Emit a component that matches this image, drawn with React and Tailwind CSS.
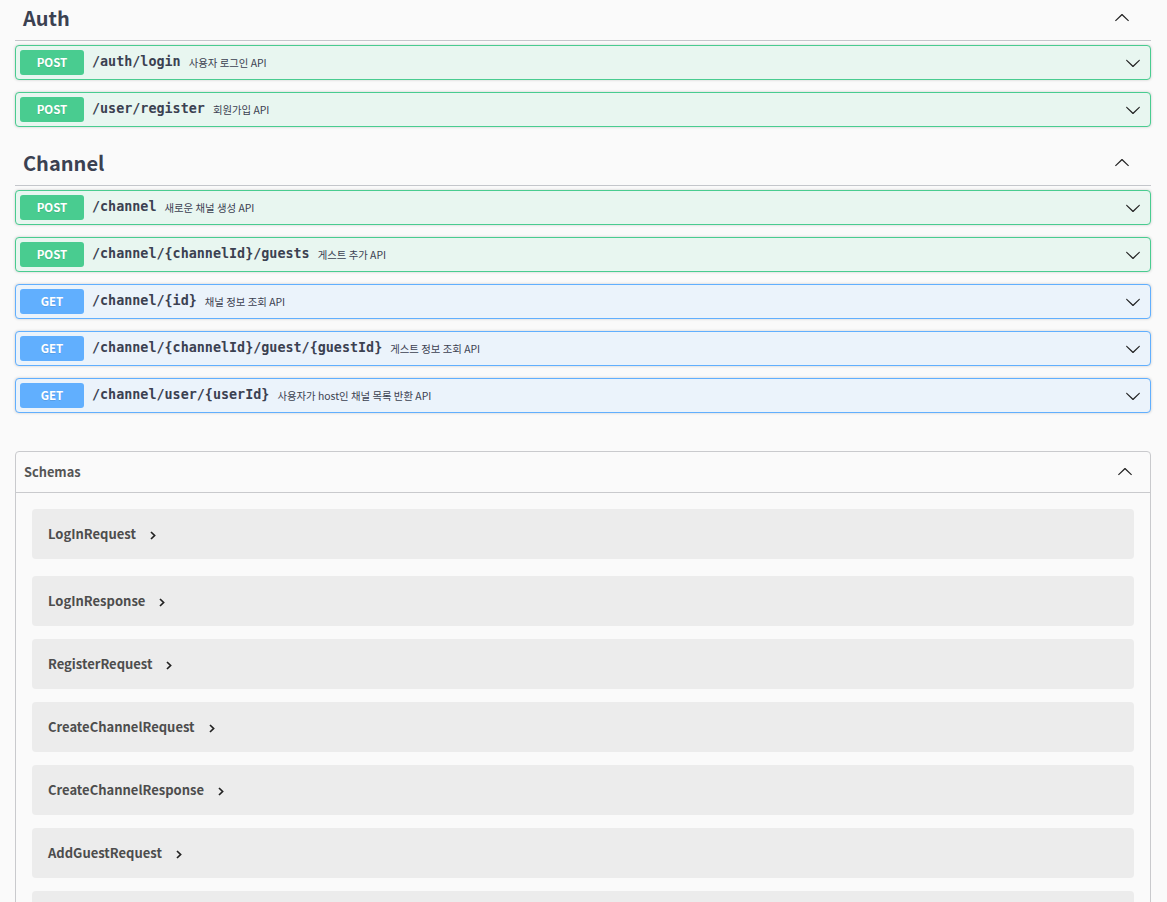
import React from "react";

const sans = "font-['Noto_Sans_CJK_KR','Noto_Sans',sans-serif]";
const mono = "font-['DejaVu_Sans_Mono','Liberation_Mono',monospace]";

const sections = [
    {
        name: "Auth",
        ops: [
            { method: "POST", path: "/auth/login", summary: "사용자 로그인 API" },
            { method: "POST", path: "/user/register", summary: "회원가입 API" },
        ],
    },
    {
        name: "Channel",
        ops: [
            { method: "POST", path: "/channel", summary: "새로운 채널 생성 API" },
            { method: "POST", path: "/channel/{channelId}/guests", summary: "게스트 추가 API" },
            { method: "GET", path: "/channel/{id}", summary: "채널 정보 조회 API" },
            { method: "GET", path: "/channel/{channelId}/guest/{guestId}", summary: "게스트 정보 조회 API" },
            { method: "GET", path: "/channel/user/{userId}", summary: "사용자가 host인 채널 목록 반환 API" },
        ],
    },
];

const schemas = [
    "LogInRequest",
    "LogInResponse",
    "RegisterRequest",
    "CreateChannelRequest",
    "CreateChannelResponse",
    "AddGuestRequest",
    "AddGuestResponse",
];

function Arrow({ up = false }) {
    return (
        <svg
            width="16"
            height="16"
            viewBox="0 0 20 20"
            className={up ? "rotate-180" : ""}
            fill="#222"
        >
            <path d="M17.418 6.109c.272-.268.709-.268.979 0s.271.701 0 .969l-7.908 7.83c-.27.268-.707.268-.979 0l-7.908-7.83c-.27-.268-.27-.701 0-.969.271-.268.709-.268.979 0L10 13.25l7.418-7.141z" />
        </svg>
    );
}

function OpBlock({ op }) {
    const isPost = op.method === "POST";
    return (
        <div
            className={
                isPost
                    ? "mb-[12px] flex h-[35px] items-center rounded-[4px] border border-[#49cc90] bg-[#e8f6f0] px-[4px] shadow-[0_0_3px_rgba(0,0,0,0.19)]"
                    : "mb-[12px] flex h-[35px] items-center rounded-[4px] border border-[#61affe] bg-[#ebf3fb] px-[4px] shadow-[0_0_3px_rgba(0,0,0,0.19)]"
            }
        >
            <span
                className={
                    (isPost ? "bg-[#49cc90] " : "bg-[#61affe] ") +
                    "flex h-[25px] w-[64px] items-center justify-center rounded-[3px] text-[11.5px] font-bold text-white [text-shadow:0_1px_0_rgba(0,0,0,0.1)] " +
                    sans
                }
            >
                {op.method}
            </span>
            <span className={"pl-[8px] pr-[8px] text-[13.4px] font-bold text-[#3b4151] " + mono}>
                {op.path}
            </span>
            <span className={"flex-1 text-[10.4px] text-[#3b4151] " + sans}>{op.summary}</span>
            <span className="mr-[5px] flex items-center">
                <Arrow />
            </span>
        </div>
    );
}

function TagSection({ section, first }) {
    return (
        <div className={first ? "" : "pt-[6px]"}>
            <div className="mb-[4px] flex h-[41px] items-center justify-between border-b border-[#c4c6cb] pb-[5px] pl-[8px] pr-[21px]">
                <h3 className={"text-[20px] font-bold text-[#3b4151] " + sans}>{section.name}</h3>
                <Arrow up />
            </div>
            {section.ops.map((op) => (
                <OpBlock key={op.method + op.path} op={op} />
            ))}
        </div>
    );
}

export default function App() {
    return (
        <div className={"min-h-screen bg-[#fafafa] pl-[15px] pr-[16px] " + sans}>
            {sections.map((s, i) => (
                <TagSection key={s.name} section={s} first={i === 0} />
            ))}

            <div className="mt-[38px] rounded-[4px] border border-[#c9cacd]">
                <div className="flex h-[41px] items-center justify-between border-b border-[#c9cacd] pl-[8px] pr-[17px]">
                    <h4 className="text-[12.8px] font-bold text-[#555555]">Schemas</h4>
                    <Arrow up />
                </div>
                <div className="px-[16px] pt-[16px]">
                    {schemas.map((name, i) => (
                        <div
                            key={name}
                            className={
                                (i === 0 ? "mb-[17px] " : "mb-[13px] ") +
                                "flex h-[50px] items-center rounded-[4px] bg-[#ececec] pl-[16px]"
                            }
                        >
                            <span className="text-[13px] font-bold text-[#4d4d4d]">{name}</span>
                            <svg width="6" height="9" viewBox="0 0 6 9" className="ml-[14px] mt-[2px]">
                                <path d="M1 1 L4.6 4.5 L1 8" fill="none" stroke="#222" strokeWidth="1.7" />
                            </svg>
                        </div>
                    ))}
                </div>
            </div>
        </div>
    );
}
